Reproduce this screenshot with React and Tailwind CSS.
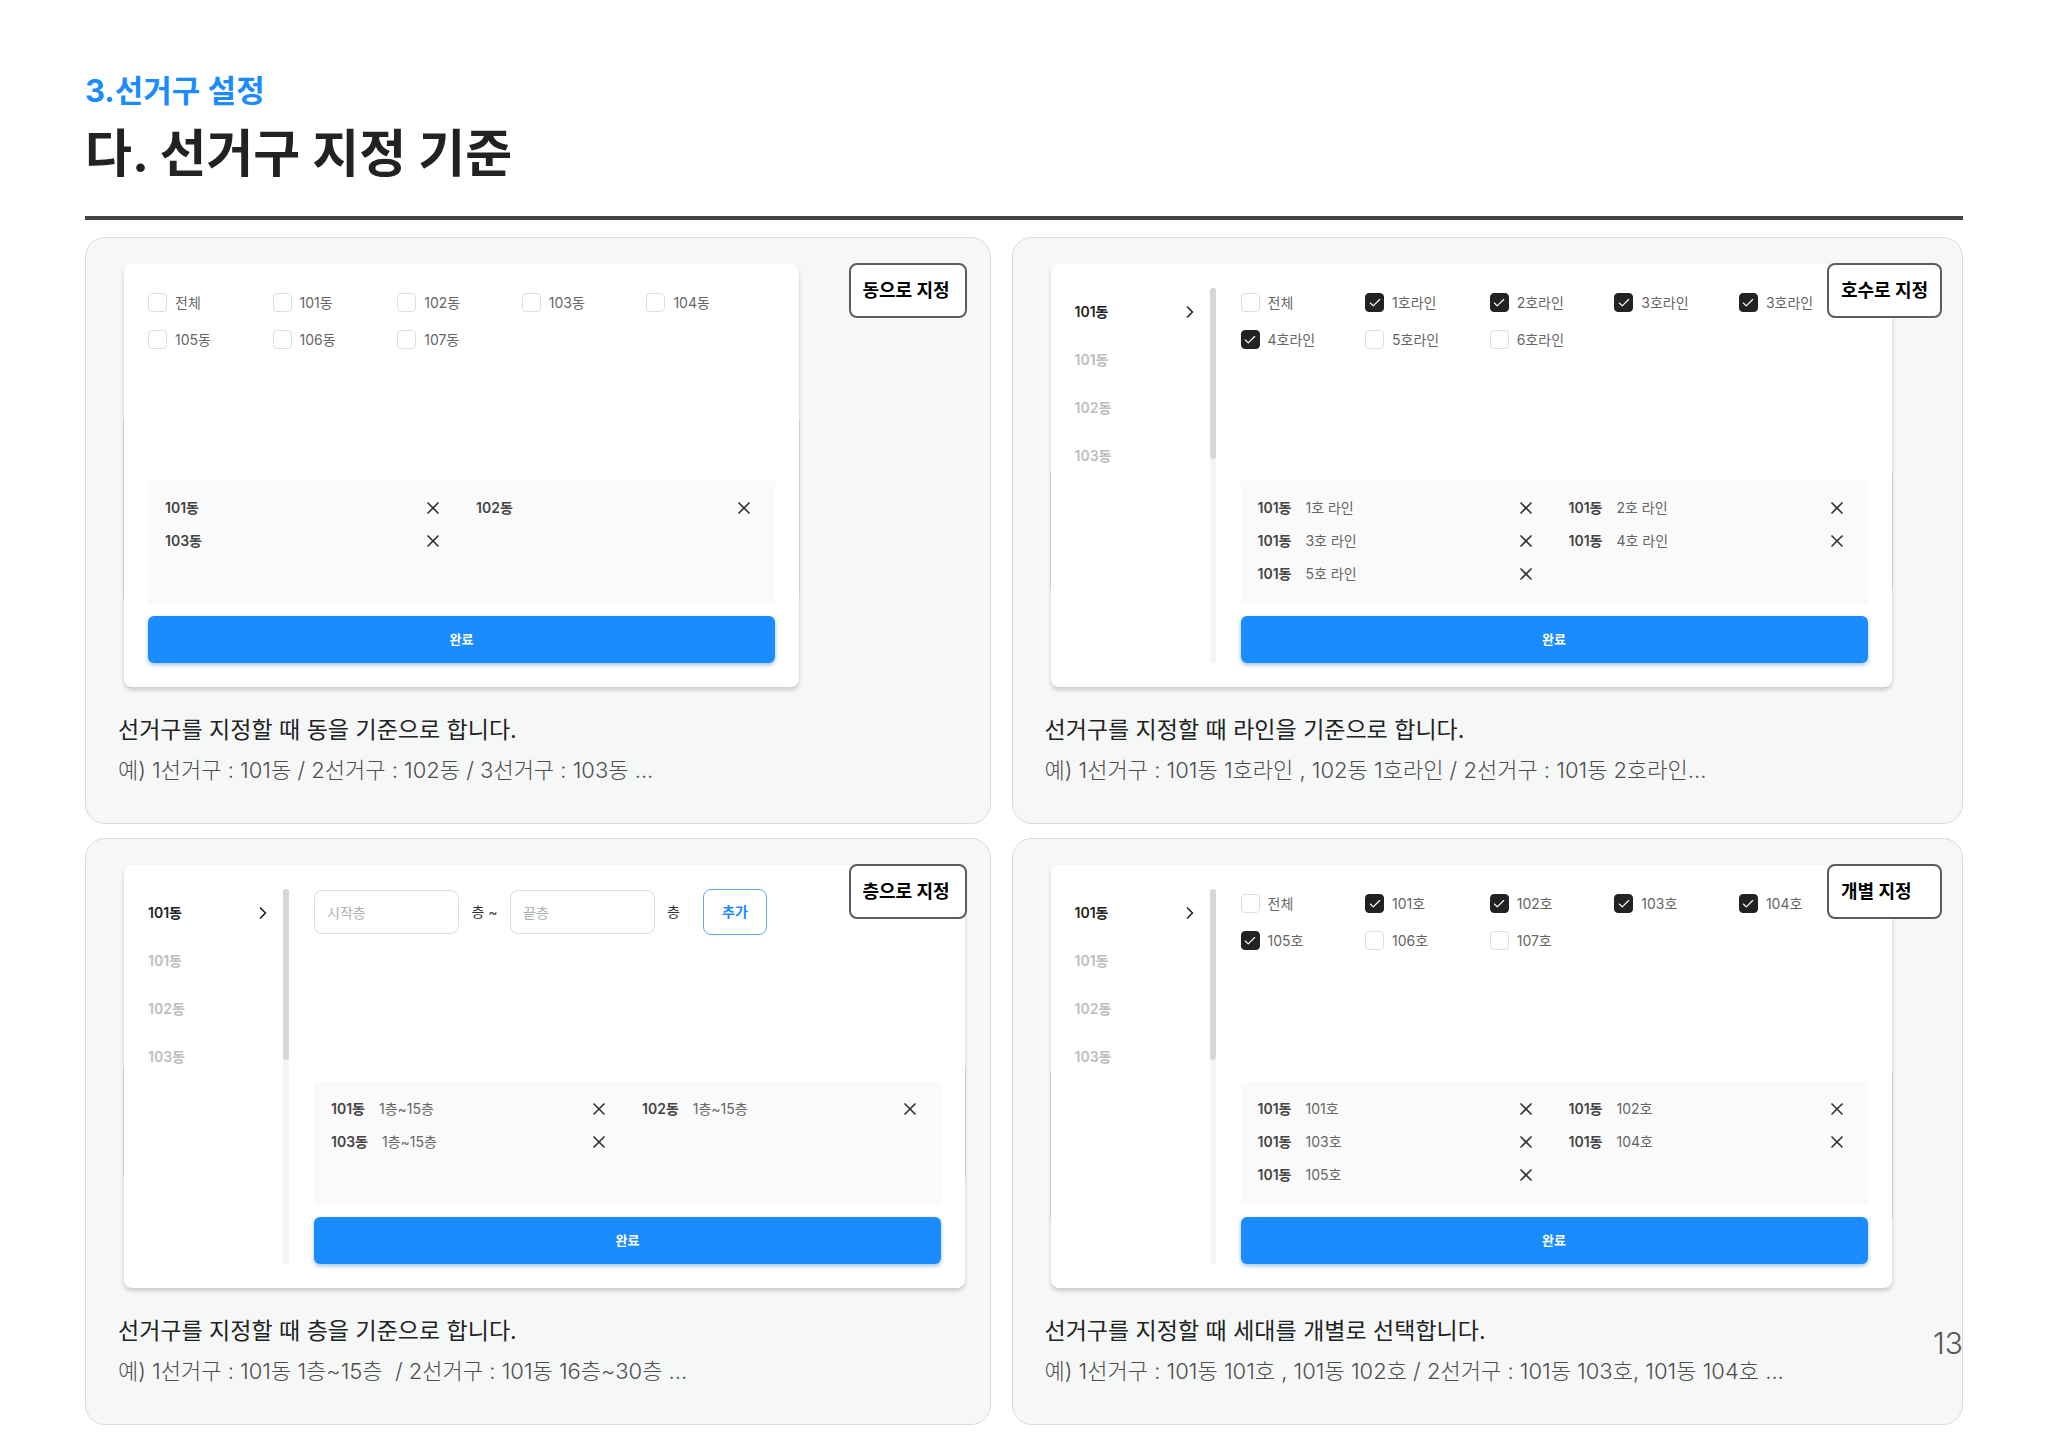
import { useState } from "react";
import { Check, ChevronRight, X } from "lucide-react";

const BUILDINGS = ["101동", "101동", "102동", "103동"];

function CheckItem({ label, defaultChecked }) {
  return (
    <label className="flex items-center gap-2 h-[19px] text-sm text-[#666666] whitespace-nowrap cursor-pointer">
      <span className="grid shrink-0 place-items-center">
        <input
          type="checkbox"
          defaultChecked={defaultChecked}
          className="peer col-start-1 row-start-1 appearance-none h-[19px] w-[19px] rounded border border-[#dedede] bg-white checked:border-[#222222] checked:bg-[#222222]"
        />
        <Check
          size={14}
          strokeWidth={2}
          className="col-start-1 row-start-1 text-white opacity-0 peer-checked:opacity-100 pointer-events-none"
        />
      </span>
      {label}
    </label>
  );
}

function CheckGrid({ items }) {
  return (
    <div className="grid grid-cols-5 gap-y-[18px] pt-[5px] pr-1">
      {items.map(([label, checked], index) => (
        <CheckItem key={index} label={label} defaultChecked={checked} />
      ))}
    </div>
  );
}

function FloorForm() {
  return (
    <div className="flex items-center text-sm text-[#333333]">
      <input
        type="text"
        aria-label="시작층"
        placeholder="시작층"
        className="h-11 w-[145px] rounded-lg border border-[#dddddd] bg-white px-3 placeholder:text-[#a9b1b4]"
      />
      <span className="w-[51px] text-center">층 ~</span>
      <input
        type="text"
        aria-label="끝층"
        placeholder="끝층"
        className="h-11 w-[145px] rounded-lg border border-[#dddddd] bg-white px-3 placeholder:text-[#a9b1b4]"
      />
      <span className="w-12 px-3">층</span>
      <button
        type="button"
        className="h-[46px] w-16 rounded-lg border border-[#5aabf5] bg-white font-semibold text-[#1b8cff]"
      >
        추가
      </button>
    </div>
  );
}

function Sidebar() {
  const [active, setActive] = useState(0);

  return (
    <div className="flex w-[141px] shrink-0">
      <ul className="flex-1">
        {BUILDINGS.map((name, index) => (
          <li key={index}>
            <button
              type="button"
              onClick={() => setActive(index)}
              className={`flex h-12 w-full items-center justify-between pr-[10px] text-sm font-semibold ${
                active === index ? "text-[#222222]" : "text-[#bdbdbd]"
              }`}
            >
              {name}
              {active === index && <ChevronRight size={20} />}
            </button>
          </li>
        ))}
      </ul>
      <div className="w-[6px] rounded-full bg-[#f5f5f5]">
        <div className="h-[171px] rounded-full bg-[#d6d6d6]"></div>
      </div>
    </div>
  );
}

function SelectedList({ items }) {
  return (
    <ul className="mt-auto grid h-[123px] grid-cols-2 content-start gap-x-[33px] gap-y-[9px] bg-[#fafafa] pt-[15px] pr-[21px] pl-[17px]">
      {items.map(([name, detail], index) => (
        <li key={index} className="flex h-6 items-center text-sm">
          <span className="font-semibold text-[#444444]">{name}</span>
          {detail && <span className="ml-[14px] text-[#666666]">{detail}</span>}
          <button type="button" aria-label="삭제" className="ml-auto text-[#333333]">
            <X size={20} strokeWidth={2} />
          </button>
        </li>
      ))}
    </ul>
  );
}

function Card({ badge, badgeClass, panelClass, edgeClass, sidebar, controls, selected, title, example }) {
  return (
    <section className="relative rounded-[20px] border border-[#d9dcdb] bg-[#f6f8f7] pt-[26px] pr-5 pb-[33px] pl-8">
      <div
        className={`relative ml-[6px] flex h-[423px] max-w-full gap-[25px] rounded-lg bg-white p-6 shadow-[0_3px_4px_rgba(0,0,0,0.18)] ${panelClass}`}
      >
        <span className={`absolute -left-px w-px bg-[#cfd2d1] ${edgeClass}`}></span>
        <span className={`absolute -right-px w-px bg-[#cfd2d1] ${edgeClass}`}></span>
        {sidebar && <Sidebar />}
        <div className="flex min-w-0 flex-1 flex-col">
          {controls}
          <SelectedList items={selected} />
          <button
            type="button"
            className="mt-3 h-[47px] shrink-0 rounded-md bg-[#1b8cff] text-[13px] font-semibold text-white shadow-[0_2px_4px_rgba(27,100,180,0.4)]"
          >
            완료
          </button>
        </div>
      </div>
      <span
        className={`absolute top-[25px] flex h-[55px] items-center rounded-lg border-2 border-[#5c5c5c] bg-white pl-3 text-lg font-bold whitespace-nowrap text-black ${badgeClass}`}
      >
        {badge}
      </span>
      <h2 className="mt-[23px] text-[23px] leading-10 text-[#222222]">{title}</h2>
      <p className="text-[22px] leading-10 font-light text-[#4d4d4d] whitespace-pre-wrap">{example}</p>
    </section>
  );
}

export default function App() {
  return (
    <main
      lang="ko"
      className="relative bg-white px-[85px] pt-[68px] pb-[22px] font-['Inter','Noto_Sans_CJK_KR',sans-serif]"
    >
      <header className="border-b-4 border-[#444444] pb-7">
        <p className="text-[31px] leading-[46px] font-bold text-[#1b8cff]">3.선거구 설정</p>
        <h1 className="mt-[6px] text-[51px] leading-[68px] font-bold text-[#222222]">다. 선거구 지정 기준</h1>
      </header>

      <div className="mt-[17px] grid grid-cols-[minmax(0,906fr)_minmax(0,952fr)] gap-x-[21px] gap-y-[14px]">
        <Card
          badge="동으로 지정"
          badgeClass="right-[23px] w-[118px]"
          panelClass="w-[675px]"
          edgeClass="top-[155px] h-[180px]"
          controls={
            <CheckGrid
              items={[
                ["전체"],
                ["101동"],
                ["102동"],
                ["103동"],
                ["104동"],
                ["105동"],
                ["106동"],
                ["107동"],
              ]}
            />
          }
          selected={[["101동"], ["102동"], ["103동"]]}
          title="선거구를 지정할 때 동을 기준으로 합니다."
          example="예) 1선거구 : 101동 / 2선거구 : 102동 / 3선거구 : 103동 ..."
        />
        <Card
          badge="호수로 지정"
          badgeClass="right-5 w-[115px]"
          panelClass="w-[841px]"
          edgeClass="top-[209px] h-[116px]"
          sidebar
          controls={
            <CheckGrid
              items={[
                ["전체"],
                ["1호라인", true],
                ["2호라인", true],
                ["3호라인", true],
                ["3호라인", true],
                ["4호라인", true],
                ["5호라인"],
                ["6호라인"],
              ]}
            />
          }
          selected={[
            ["101동", "1호 라인"],
            ["101동", "2호 라인"],
            ["101동", "3호 라인"],
            ["101동", "4호 라인"],
            ["101동", "5호 라인"],
          ]}
          title="선거구를 지정할 때 라인을 기준으로 합니다."
          example="예) 1선거구 : 101동 1호라인 , 102동 1호라인 / 2선거구 : 101동 2호라인..."
        />
        <Card
          badge="층으로 지정"
          badgeClass="right-[23px] w-[118px]"
          panelClass="w-[841px]"
          edgeClass="top-[202px] h-[111px]"
          sidebar
          controls={<FloorForm />}
          selected={[
            ["101동", "1층~15층"],
            ["102동", "1층~15층"],
            ["103동", "1층~15층"],
          ]}
          title="선거구를 지정할 때 층을 기준으로 합니다."
          example="예) 1선거구 : 101동 1층~15층  / 2선거구 : 101동 16층~30층 ..."
        />
        <Card
          badge="개별 지정"
          badgeClass="right-5 w-[115px]"
          panelClass="w-[841px]"
          edgeClass="top-[207px] h-[148px]"
          sidebar
          controls={
            <CheckGrid
              items={[
                ["전체"],
                ["101호", true],
                ["102호", true],
                ["103호", true],
                ["104호", true],
                ["105호", true],
                ["106호"],
                ["107호"],
              ]}
            />
          }
          selected={[
            ["101동", "101호"],
            ["101동", "102호"],
            ["101동", "103호"],
            ["101동", "104호"],
            ["101동", "105호"],
          ]}
          title="선거구를 지정할 때 세대를 개별로 선택합니다."
          example="예) 1선거구 : 101동 101호 , 101동 102호 / 2선거구 : 101동 103호, 101동 104호 ..."
        />
      </div>

      <span className="absolute right-[85px] bottom-[84px] text-[30px] leading-10 font-light text-[#555555]">13</span>
    </main>
  );
}
